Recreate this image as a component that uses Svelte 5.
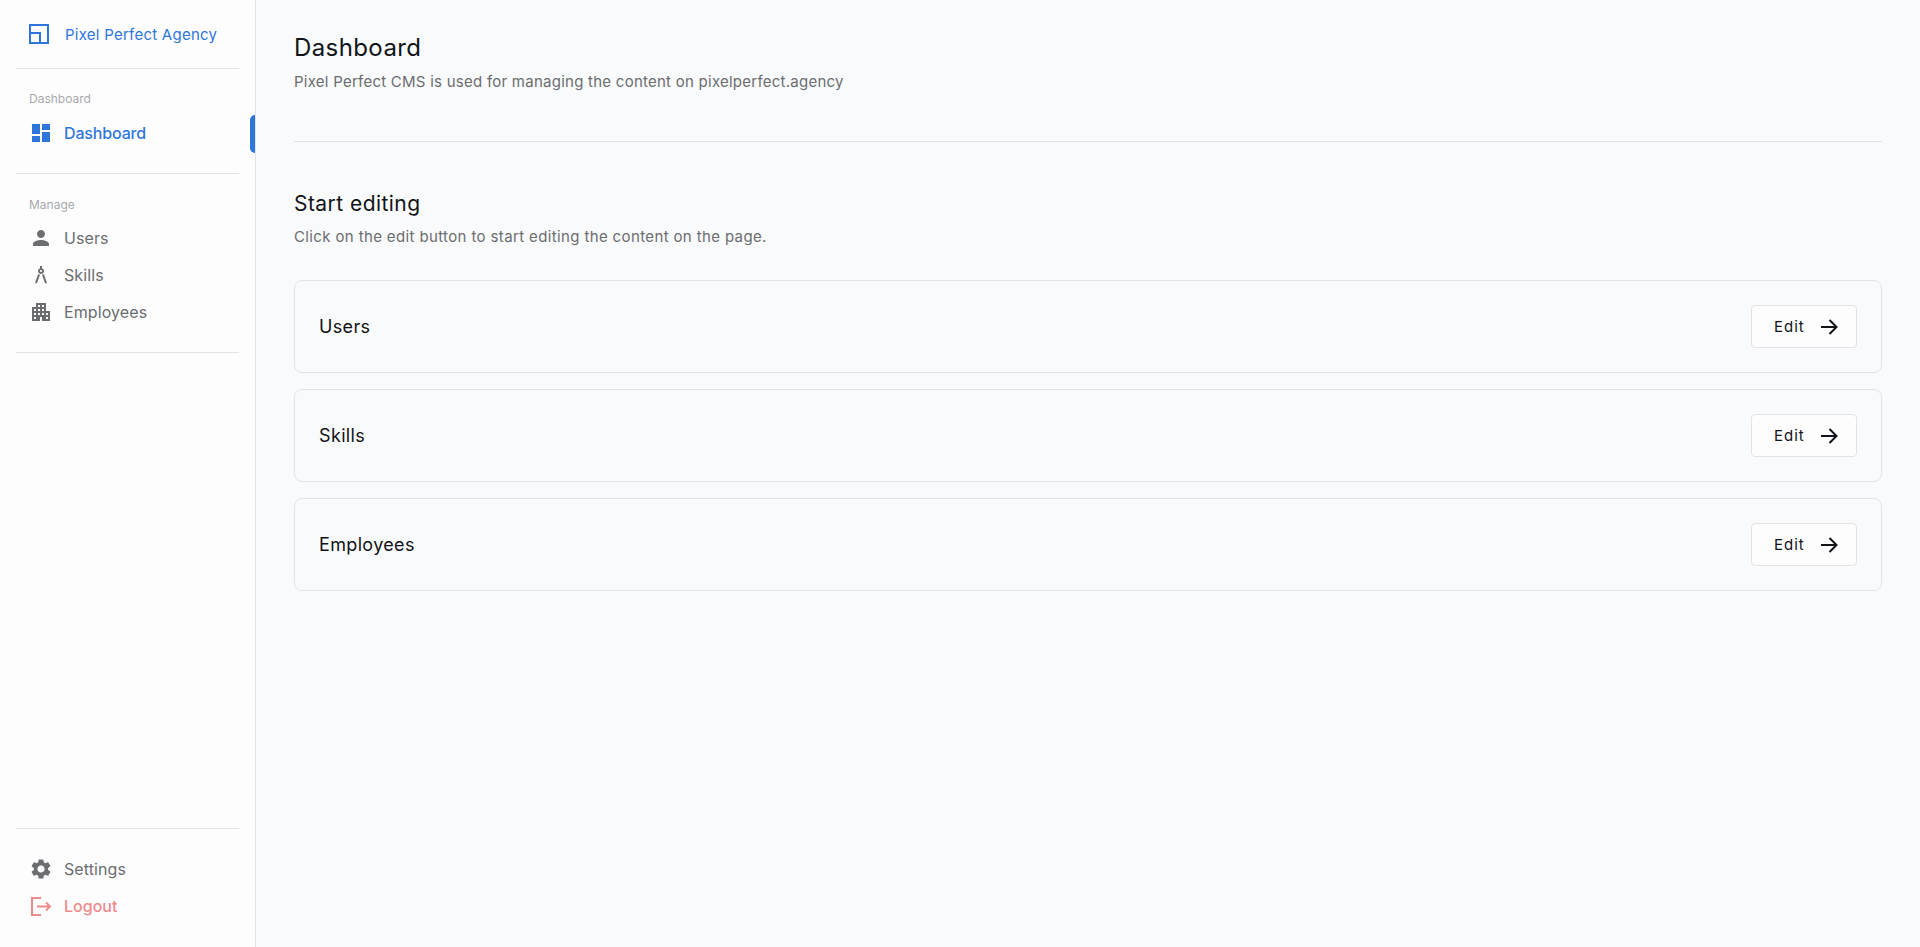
<script>
  const cards = ['Users', 'Skills', 'Employees'];
</script>

<div class="layout">
  <aside class="sidebar">
    <div class="brand">
      <svg class="logo" width="20" height="20" viewBox="0 0 20 20" fill="none" stroke="#2f76db" stroke-width="2"><rect x="1" y="1" width="18" height="18"/><path d="M1 9H11V19"/></svg>
      <span>Pixel Perfect Agency</span>
    </div>
    <div class="group first">
      <div class="label">Dashboard</div>
      <div class="item active">
        <svg viewBox="0 0 24 24" width="24" height="24" fill="#2f76db"><path d="M3 13h8V3H3v10zm0 8h8v-6H3v6zm10 0h8V11h-8v10zm0-18v6h8V3h-8z"/></svg>
        <span>Dashboard</span>
        <i class="bar"></i>
      </div>
    </div>
    <div class="group">
      <div class="label">Manage</div>
      <div class="item">
        <svg viewBox="0 0 24 24" width="24" height="24" fill="#6b6d70"><path d="M12 12c2.21 0 4-1.79 4-4s-1.79-4-4-4-4 1.79-4 4 1.79 4 4 4zm0 2c-2.67 0-8 1.34-8 4v2h16v-2c0-2.66-5.33-4-8-4z"/></svg>
        <span>Users</span>
      </div>
      <div class="item">
        <svg viewBox="0 0 24 24" width="24" height="24" fill="#6b6d70"><path d="M6.36 18.78 6.61 21l1.62-1.54 2.77-7.6c-.68-.17-1.280-.51-1.770-.98L6.360 18.780zM14.770 10.880c-.49.47-1.100.81-1.770.98l2.770 7.600L17.390 21l.26-2.220-2.880-7.900zM15 8c0-1.300-.84-2.400-2-2.820V3h-2v2.180C9.840 5.600 9 6.700 9 8c0 1.660 1.340 3 3 3s3-1.340 3-3zm-3 1c-.55 0-1-.45-1-1s.45-1 1-1 1 .45 1 1-.45 1-1 1z"/></svg>
        <span>Skills</span>
      </div>
      <div class="item">
        <svg viewBox="0 0 24 24" width="24" height="24" fill="#6b6d70"><path d="M17 11V3H7v4H3v14h8v-4h2v4h8V11h-4zM7 19H5v-2h2v2zm0-4H5v-2h2v2zm0-4H5V9h2v2zm4 4H9v-2h2v2zm0-4H9V9h2v2zm0-4H9V5h2v2zm4 8h-2v-2h2v2zm0-4h-2V9h2v2zm0-4h-2V5h2v2zm4 12h-2v-2h2v2zm0-4h-2v-2h2v2z"/></svg>
        <span>Employees</span>
      </div>
    </div>
    <div class="bottom">
      <div class="item">
        <svg viewBox="0 0 24 24" width="24" height="24" fill="#6b6d70"><path d="M19.14 12.94c.04-.3.06-.61.06-.94 0-.32-.02-.64-.07-.94l2.03-1.58a.49.49 0 0 0 .12-.61l-1.920-3.320a.488.488 0 0 0-.59-.22l-2.390.96c-.5-.38-1.030-.7-1.620-.94l-.36-2.540a.484.484 0 0 0-.48-.41h-3.840c-.24 0-.43.17-.47.41l-.36 2.540c-.59.24-1.130.57-1.620.94l-2.390-.96c-.22-.08-.47 0-.59.22L2.740 8.870c-.12.21-.08.47.12.61l2.030 1.580c-.05.3-.09.63-.09.94s.02.64.07.94l-2.030 1.580a.49.49 0 0 0-.12.61l1.920 3.320c.12.22.37.29.59.22l2.390-.96c.5.38 1.030.7 1.620.94l.36 2.540c.05.24.24.41.48.41h3.840c.24 0 .44-.17.47-.41l.36-2.540c.59-.24 1.130-.56 1.620-.94l2.390.96c.22.08.47 0 .59-.22l1.920-3.320c.12-.22.07-.47-.12-.61l-2.010-1.580zM12 15.600c-1.980 0-3.600-1.620-3.600-3.600s1.620-3.600 3.600-3.600 3.600 1.620 3.600 3.600-1.620 3.600-3.600 3.600z"/></svg>
        <span>Settings</span>
      </div>
      <div class="item danger">
        <svg viewBox="0 0 24 24" width="24" height="24" fill="none" stroke="#ef8a8c" stroke-width="2"><path d="M12 4H3v17h9"/><path d="M8 12.500h12.500M17 8.500l4 4-4 4"/></svg>
        <span>Logout</span>
      </div>
    </div>
  </aside>

  <main class="main">
    <header class="head">
      <h1>Dashboard</h1>
      <p>Pixel Perfect CMS is used for managing the content on pixelperfect.agency</p>
    </header>
    <section class="section">
      <h2>Start editing</h2>
      <p>Click on the edit button to start editing the content on the page.</p>
      <div class="cards">
        {#each cards as c}
          <div class="card">
            <span class="name">{c}</span>
            <button class="edit">
              <span>Edit</span>
              <svg width="20" height="20" viewBox="0 0 20 20" fill="none" stroke="#111318" stroke-width="2"><path d="M2 10h15.500M10.500 3 17.500 10l-7 7"/></svg>
            </button>
          </div>
        {/each}
      </div>
    </section>
  </main>
</div>

<style>
  :global(body) {
    margin: 0;
    background: #f9fafb;
    font-family: Inter, "Liberation Sans", sans-serif;
  }
  .layout {
    display: flex;
    height: 947px;
    overflow: hidden;
  }
  .sidebar {
    width: 255px;
    flex: none;
    display: flex;
    flex-direction: column;
    background: #fdfdfe;
    border-right: 1px solid #e2e3e6;
  }
  .brand {
    display: flex;
    align-items: center;
    gap: 16px;
    height: 68px;
    margin: 0 16px;
    padding-left: 13px;
    border-bottom: 1px solid #e2e3e6;
    color: #2f76db;
    font-size: 15px;
    letter-spacing: 0.25px;
  }
  .group {
    margin: 0 16px;
    padding-bottom: 22px;
    border-bottom: 1px solid #e2e3e6;
  }
  .label {
    padding: 0 13px;
    margin-top: 22px;
    margin-bottom: 5px;
    height: 18px;
    line-height: 18px;
    font-size: 12px;
    color: #a8a9ac;
  }
  .group.first .label { margin-top: 21px; margin-bottom: 6px; }
  .item {
    position: relative;
    display: flex;
    align-items: center;
    gap: 11px;
    height: 37px;
    padding-left: 13px;
    color: #6b6d70;
    font-size: 16px;
    letter-spacing: 0.1px;
  }
  .item svg { flex: none; width: 24px; height: 24px; }
  .item.active { color: #2f76db; font-weight: 500; letter-spacing: -0.15px; }
  .item.danger { color: #ef8a8c; font-weight: 500; letter-spacing: 0; }
  .bar {
    position: absolute;
    right: -16px;
    top: 1px;
    width: 5px;
    height: 38px;
    background: #2f76db;
    border-radius: 5px 0 0 5px;
  }
  .bottom {
    margin: auto 16px 0;
    padding: 21px 0 23px;
    border-top: 1px solid #e2e3e6;
  }
  .main {
    flex: 1;
    padding: 0 38px;
    min-width: 0;
  }
  .head {
    height: 141px;
    border-bottom: 1px solid #e2e3e6;
  }
  h1 {
    margin: 0;
    padding-top: 32px;
    font-size: 24px;
    line-height: 32px;
    font-weight: 400;
    letter-spacing: 0.4px;
    color: #111318;
  }
  .head p, .section p {
    margin: 0;
    font-size: 15px;
    line-height: 22px;
    color: #6b6d70;
  }
  .head p { margin-top: 7px; letter-spacing: 0.25px; }
  .section { padding-top: 48px; }
  h2 {
    margin: 0;
    font-size: 21px;
    line-height: 28px;
    font-weight: 400;
    letter-spacing: 0.45px;
    color: #111318;
  }
  .section p { margin-top: 8px; letter-spacing: 0.37px; }
  .cards {
    display: flex;
    flex-direction: column;
    gap: 16px;
    margin-top: 32px;
  }
  .card {
    display: flex;
    align-items: center;
    justify-content: space-between;
    height: 93px;
    box-sizing: border-box;
    padding: 0 24px;
    border: 1px solid #e2e3e6;
    border-radius: 8px;
  }
  .name {
    font-size: 18px;
    letter-spacing: 0.35px;
    color: #111318;
  }
  .edit {
    display: flex;
    align-items: center;
    gap: 14px;
    width: 106px;
    height: 43px;
    padding: 0 0 0 22px;
    background: #fdfdfe;
    border: 1px solid #e2e3e6;
    border-radius: 4px;
    color: #111318;
    font: inherit;
    font-size: 15px;
    letter-spacing: 1px;
  }
</style>
